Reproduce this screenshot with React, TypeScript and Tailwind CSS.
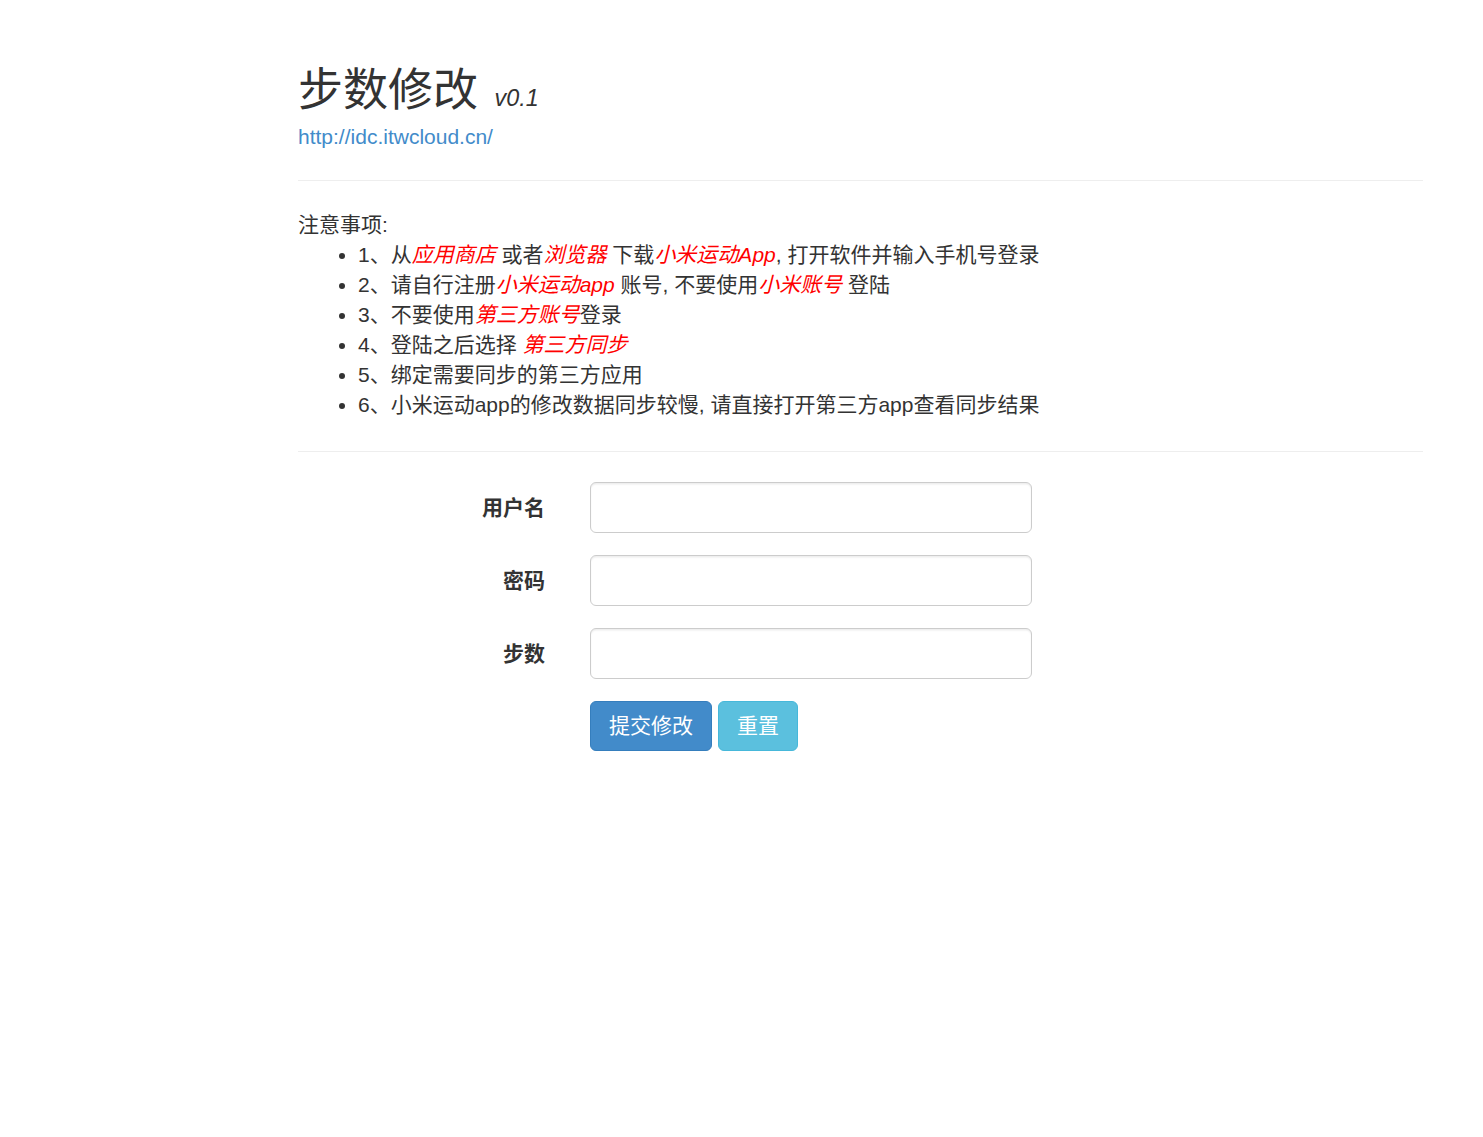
const Red = ({children}: {children: React.ReactNode}) => (
    <i className="text-[#ff0000] italic">{children}</i>
);

const Field = ({label}: {label: string}) => (
    <div className="flex items-center mb-[22px]">
        <label className="w-[247px] text-right font-bold text-[21px]">{label}</label>
        <input
            type="text"
            className="ml-[45px] w-[442px] h-[51px] rounded-[6px] border border-[#cccccc] bg-white px-[18px] shadow-[inset_0_1.5px_1.5px_rgba(0,0,0,0.075)] focus:outline-none"
        />
    </div>
);

const App = () => {
    return (
        <div
            className="min-h-screen bg-white text-[#333333] text-[21px] leading-[30px] font-['Liberation_Sans','Noto_Sans_CJK_SC',sans-serif]">
            <div className="ml-[298px] w-[1125px] pt-[66px]">
                <h1 className="text-[45px] leading-[50px] font-normal">
                    步数修改 <small className="ml-[4px] text-[23.4px] leading-none italic text-[#333333]">v0.1</small>
                </h1>
                <a href="#" className="block mt-[6px] text-[#428bca]">http://idc.itwcloud.cn/</a>
                <hr className="mt-[28px] border-t border-[#eeeeee]"/>
                <div className="mt-[29px]">
                    <div>注意事项:</div>
                    <ul className="list-disc pl-[60px]">
                        <li>1、从<Red>应用商店</Red> 或者<Red>浏览器</Red> 下载<Red>小米运动App</Red>, 打开软件并输入手机号登录</li>
                        <li>2、请自行注册<Red>小米运动app</Red> 账号, 不要使用<Red>小米账号</Red> 登陆</li>
                        <li>3、不要使用<Red>第三方账号</Red>登录</li>
                        <li>4、登陆之后选择 <Red>第三方同步</Red></li>
                        <li>5、绑定需要同步的第三方应用</li>
                        <li>6、小米运动app的修改数据同步较慢, 请直接打开第三方app查看同步结果</li>
                    </ul>
                </div>
                <hr className="mt-[31px] border-t border-[#eeeeee]"/>
                <form className="mt-[30px]">
                    <Field label="用户名"/>
                    <Field label="密码"/>
                    <Field label="步数"/>
                    <div className="flex gap-[6px] ml-[292px] mt-[1px]">
                        <button type="button"
                                className="h-[50px] px-[18px] rounded-[6px] border border-[#357ebd] bg-[#428bca] text-white text-[21px]">
                            提交修改
                        </button>
                        <button type="reset"
                                className="h-[50px] px-[18px] rounded-[6px] border border-[#46b8da] bg-[#5bc0de] text-white text-[21px]">
                            重置
                        </button>
                    </div>
                </form>
            </div>
        </div>
    );
};
export default App;
